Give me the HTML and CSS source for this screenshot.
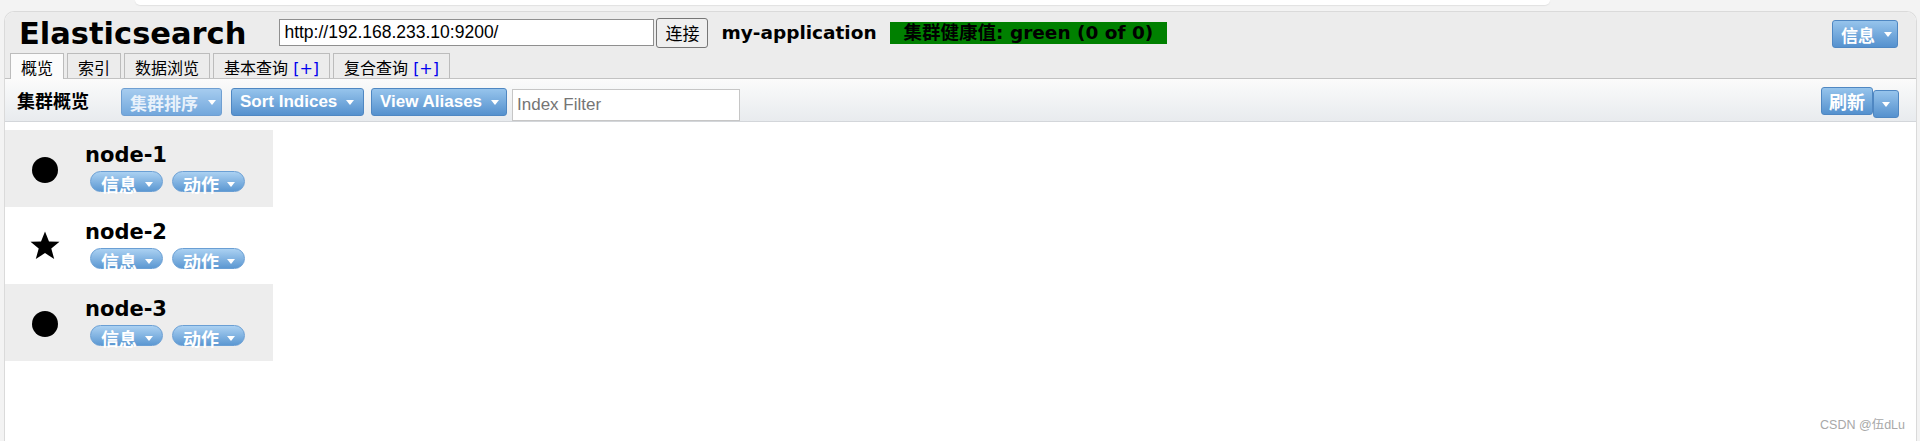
FILE: index.html
```html
<!DOCTYPE html>
<html lang="zh-CN">
<head>
  <meta charset="UTF-8" />
  <title>Elasticsearch Head</title>
  <link rel="stylesheet" href="styles.css">
</head>
<body>
  <!-- browser strip above the page -->
  <div class="chrome"><div class="chrome-tab"></div></div>

  <div class="panel">
    <div class="header">
      <div class="top-row">
        <h1 class="title">Elasticsearch</h1>
        <input class="url" type="text" value="http://192.168.233.10:9200/">
        <button class="connect">连接</button>
        <span class="cluster-name">my-application</span>
        <span class="health">集群健康值: green (0 of 0)</span>
        <span class="spacer"></span>
        <button class="btn btn-info">信息<span class="caret"></span></button>
      </div>
      <!-- tabs -->
      <div class="tabs">
        <div class="tab active">概览</div>
        <div class="tab">索引</div>
        <div class="tab">数据浏览</div>
        <div class="tab">基本查询 <span class="plus">[+]</span></div>
        <div class="tab">复合查询 <span class="plus">[+]</span></div>
      </div>
    </div>

    <!-- toolbar -->
    <div class="toolbar">
      <span class="toolbar-label">集群概览</span>
      <button class="btn btn-cjk btn-faded">集群排序<span class="caret"></span></button>
      <button class="btn btn-sort">Sort Indices<span class="caret"></span></button>
      <button class="btn btn-alias">View Aliases<span class="caret"></span></button>
      <input class="filter" type="text" placeholder="Index Filter">
      <div class="refresh-group">
        <button class="btn btn-refresh">刷新</button>
        <button class="btn btn-drop"><span class="caret"></span></button>
      </div>
    </div>

    <!-- nodes -->
    <div class="nodes">
      <div class="node-row alt">
        <div class="node-icon">
          <svg width="28" height="28" viewBox="0 0 28 28"><circle cx="14" cy="14" r="13" fill="#000"/></svg>
        </div>
        <div class="node-body">
          <div class="node-name">node-1</div>
          <div class="pills">
            <span class="pill">信息<span class="caret"></span></span>
            <span class="pill">动作<span class="caret"></span></span>
          </div>
        </div>
      </div>
      <div class="node-row">
        <div class="node-icon star">
          <svg width="30" height="30" viewBox="0 0 30 30"><polygon fill="#000" points="15,0.5 19,10.4 29.5,10.8 21.3,17.6 24.2,28 15,22.1 5.8,28 8.7,17.6 0.5,10.8 11,10.4"/></svg>
        </div>
        <div class="node-body">
          <div class="node-name">node-2</div>
          <div class="pills">
            <span class="pill">信息<span class="caret"></span></span>
            <span class="pill">动作<span class="caret"></span></span>
          </div>
        </div>
      </div>
      <div class="node-row alt">
        <div class="node-icon">
          <svg width="28" height="28" viewBox="0 0 28 28"><circle cx="14" cy="14" r="13" fill="#000"/></svg>
        </div>
        <div class="node-body">
          <div class="node-name">node-3</div>
          <div class="pills">
            <span class="pill">信息<span class="caret"></span></span>
            <span class="pill">动作<span class="caret"></span></span>
          </div>
        </div>
      </div>
    </div>

    <div class="watermark">CSDN @伍dLu</div>
  </div>
</body>
</html>
```

FILE: styles.css
```css
* {
  box-sizing: border-box;
}
body {
  margin: 0;
  height: 441px;
  overflow: hidden;
  background: #f3f3f3;
  font-family: "DejaVu Sans", "Noto Sans CJK SC", sans-serif;
  color: #000;
}
/* browser strip */
.chrome {
  height: 11px;
}
.chrome-tab {
  margin-left: 135px;
  width: 1415px;
  height: 5px;
  background: #fff;
  border-radius: 0 0 8px 8px;
  box-shadow: 0 1px 1px #e2e2e2;
}
/* main panel */
.panel {
  position: relative;
  margin: 0 3px 0 4px;
  height: 430px;
  background: #fff;
  border: 1px solid #dadada;
  border-bottom: none;
  border-radius: 10px 10px 0 0;
  overflow: hidden;
}
.header {
  background: #ececec;
}
.top-row {
  display: flex;
  align-items: center;
  height: 41px;
  padding: 0 18px 0 14px;
}
.title {
  margin: 3px 0 0;
  font-size: 30.5px;
  font-weight: bold;
  line-height: 36px;
}
.url {
  margin-left: 33px;
  width: 375px;
  height: 27px;
  padding: 0 4px;
  border: 1px solid #8f8f8f;
  font: 17.5px "Liberation Sans", sans-serif;
  color: #000;
  background: #fff;
}
.connect {
  margin-left: 2px;
  height: 30px;
  padding: 0 8px;
  font: 17px "Noto Sans CJK SC", sans-serif;
  background: #efefef;
  border: 1px solid #767676;
  border-radius: 3px;
  color: #000;
}
.cluster-name {
  margin-left: 13px;
  font-size: 18.5px;
  font-weight: bold;
}
.health {
  margin-left: 13px;
  height: 22px;
  padding: 0 14px;
  line-height: 22px;
  font-size: 18.5px;
  font-weight: bold;
  background: #008000;
  color: #000;
}
.spacer {
  flex: 1;
}
/* blue buttons */
.btn {
  display: inline-flex;
  align-items: center;
  height: 28px;
  padding: 0 7px 0 8px;
  border: 1px solid #4f87c2;
  border-radius: 3px;
  background: linear-gradient(#96c4ec, #5591ce);
  color: #fff;
  font: bold 17px "Liberation Sans", "Noto Sans CJK SC", sans-serif;
  white-space: nowrap;
}
.caret {
  display: inline-block;
  width: 0;
  height: 0;
  margin-left: 9px;
  border-left: 4.5px solid transparent;
  border-right: 4.5px solid transparent;
  border-top: 5px solid #fff;
}
.btn-info {
  margin-top: 3px;
  width: 66px;
}
/* tabs */
.tabs {
  display: flex;
  align-items: flex-end;
  gap: 3px;
  height: 25px;
  padding-left: 5px;
}
.tab {
  position: relative;
  height: 25px;
  padding: 3px 10px 0;
  border: 1px solid #bcbcbc;
  border-bottom: none;
  font-size: 16px;
  line-height: 24px;
  white-space: nowrap;
}
.tab.active {
  z-index: 1;
  height: 26px;
  margin-bottom: -1px;
  background: #fbfbfb;
}
.plus {
  color: #0000ee;
}
/* toolbar */
.toolbar {
  display: flex;
  align-items: flex-start;
  height: 44px;
  padding: 9px 17px 0 12px;
  border-top: 1px solid #c2c2c2;
  border-bottom: 1px solid #d3d6da;
  background: linear-gradient(#fbfbfb, #e8ebee);
}
.toolbar-label {
  margin-top: 2px;
  font-size: 18px;
  font-weight: bold;
  line-height: 24px;
}
.btn-cjk {
  margin-left: 32px;
  width: 101px;
  font-size: 17px;
}
.btn-cjk .caret {
  margin-left: 10px;
}
.btn-faded {
  background: linear-gradient(#a6ccef, #72a7dc);
  border-color: #6f9fd2;
  color: #e9f2fb;
}
.btn-sort {
  margin-left: 9px;
  width: 133px;
}
.btn-alias {
  margin-left: 7px;
  width: 136px;
}
.filter {
  margin: 1px 0 0 5px;
  width: 228px;
  height: 32px;
  padding: 0 4px;
  border: 1px solid #c6c6c6;
  font: 17px "Liberation Sans", sans-serif;
  background: #fff;
}
.filter::placeholder {
  color: #757575;
}
.refresh-group {
  display: flex;
  align-items: flex-start;
  margin-left: auto;
}
.btn-refresh {
  margin-top: -1px;
  width: 52px;
  padding: 0 7px;
  font-size: 18px;
}
.btn-drop {
  margin-top: 2px;
  width: 26px;
  padding: 0;
  justify-content: center;
}
.btn-drop .caret {
  margin-left: 0;
}
/* node list */
.nodes {
  width: 268px;
  margin-top: 8px;
}
.node-row {
  display: flex;
  align-items: flex-start;
  height: 77px;
}
.node-row.alt {
  background: #ededed;
}
.node-icon {
  display: flex;
  justify-content: center;
  width: 80px;
  margin-top: 26px;
}
.node-icon.star {
  margin-top: 24px;
}
.node-body {
  padding-top: 13px;
}
.node-name {
  font-size: 21px;
  font-weight: bold;
  line-height: 24px;
}
.pills {
  display: flex;
  gap: 9px;
  margin: 4px 0 0 5px;
}
.pill {
  display: inline-flex;
  align-items: flex-start;
  height: 21px;
  padding: 2px 9px 0 10px;
  border: 1px solid #6a9fd4;
  border-radius: 11px;
  background: linear-gradient(#abd1f2, #5c98d2);
  color: #fff;
  font: bold 18px "Noto Sans CJK SC", sans-serif;
  line-height: 21px;
  white-space: nowrap;
}
.pill .caret {
  margin: 8px 0 0 8px;
}
.watermark {
  position: absolute;
  right: 11px;
  bottom: 8px;
  font: 12.5px "Liberation Sans", "Noto Sans CJK SC", sans-serif;
  color: #a8a8a8;
}
```
